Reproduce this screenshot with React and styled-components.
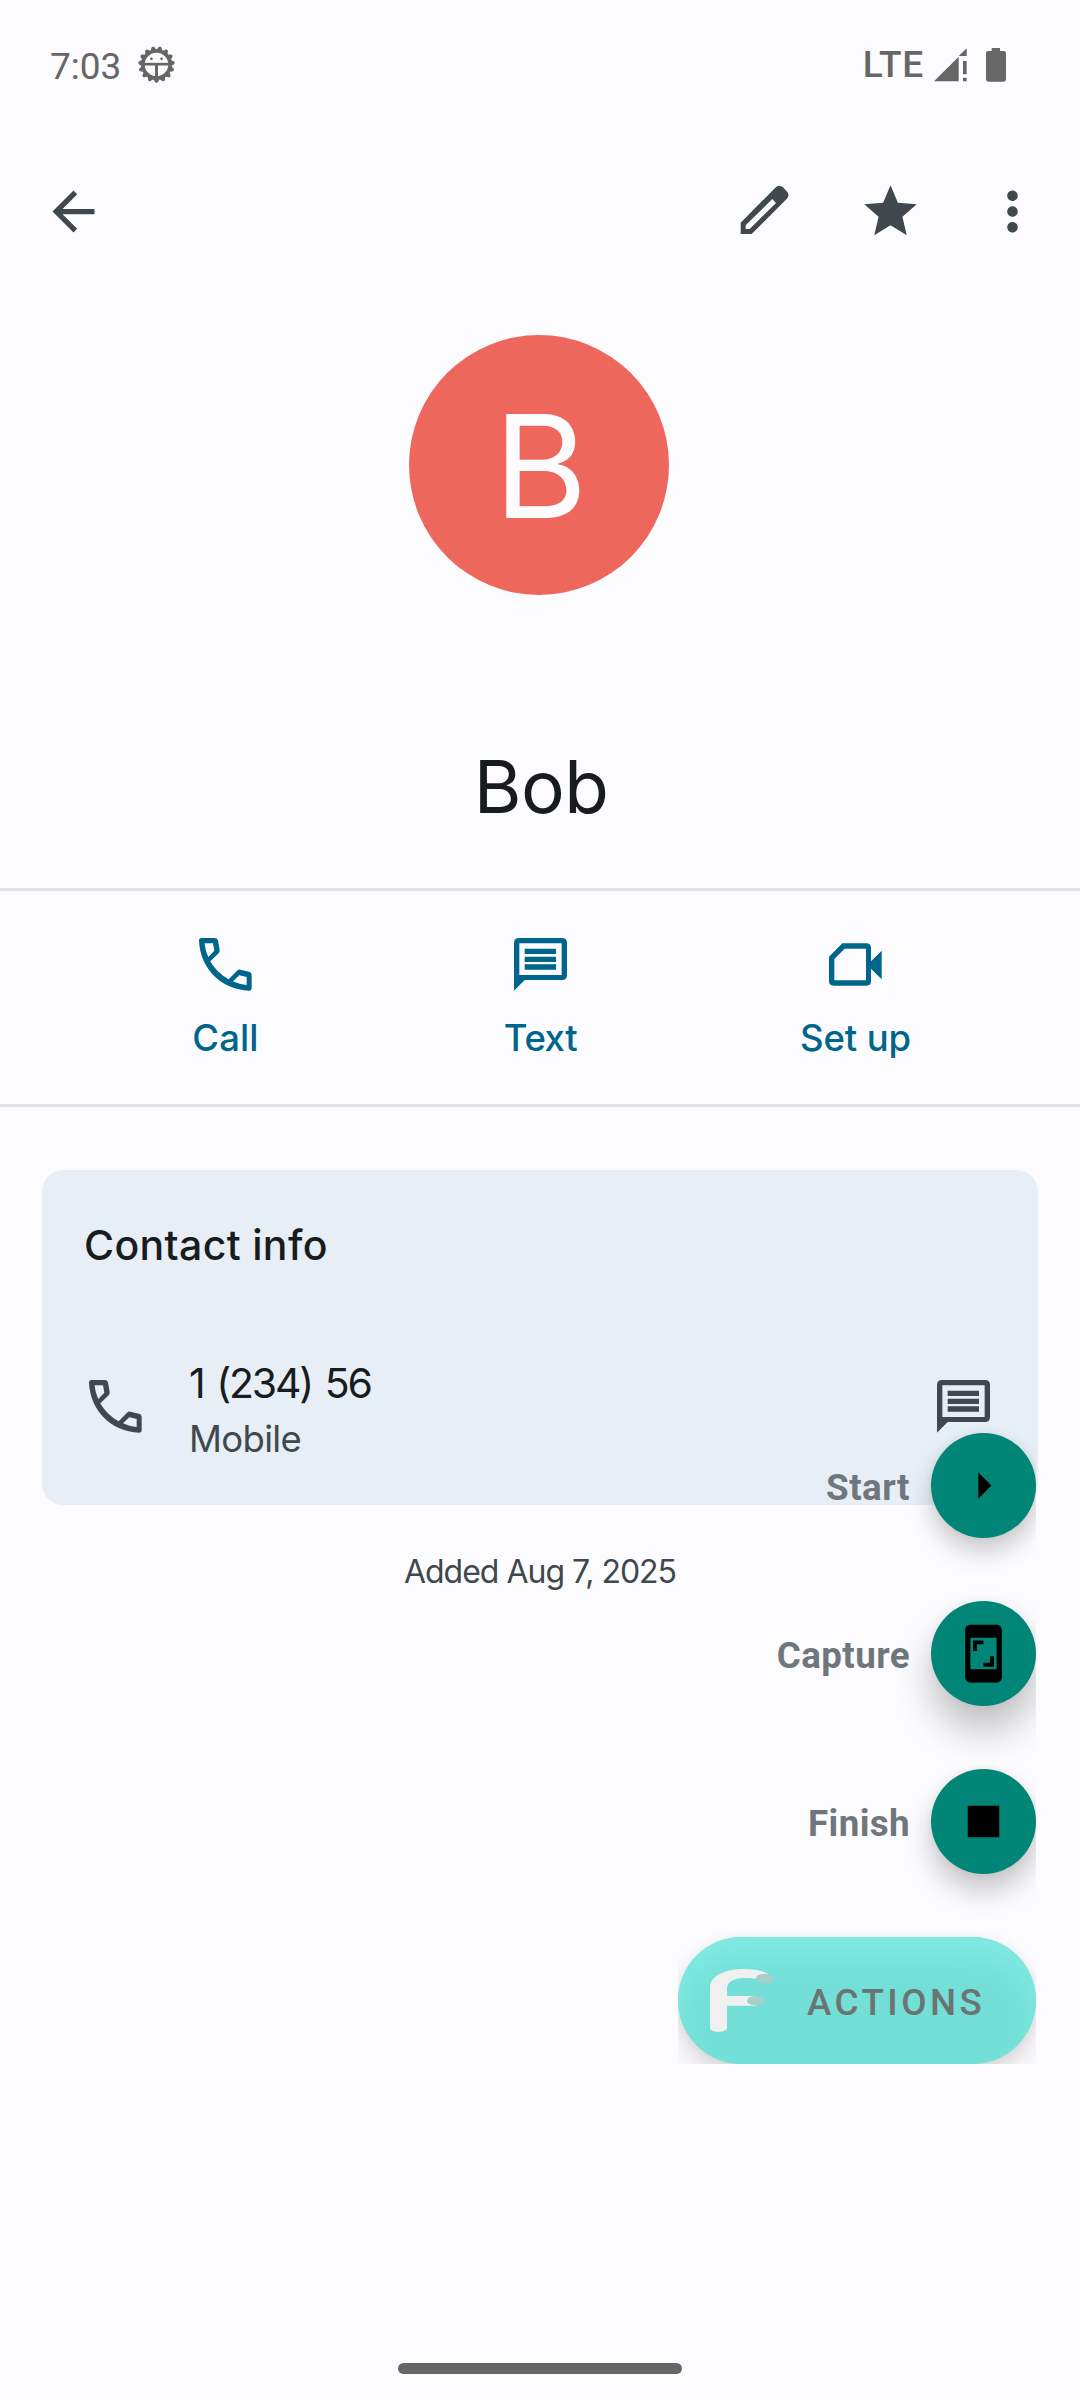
import React from "react";
import styled, { createGlobalStyle } from "styled-components";

const sans = `Inter, "Open Sans", sans-serif`;
const roboto = `Roboto, "Liberation Sans", sans-serif`;

const Global = createGlobalStyle`
  * { box-sizing: border-box; }
  body { margin: 0; background: #fcfcff; }
  svg { display: block; flex: none; }
`;

const Screen = styled.div`
  position: relative;
  display: flex;
  flex-direction: column;
  width: 1080px;
  height: 2400px;
  background: #fcfcff;
  color: #191c1e;
  font-family: ${sans};
  overflow: hidden;
`;

const Text = styled.span`
  display: block;
  white-space: pre;
  font-family: ${(p) => p.$family || sans};
  font-size: ${(p) => p.$size}px;
  font-weight: ${(p) => p.$weight || 400};
  line-height: ${(p) => p.$line}px;
  letter-spacing: ${(p) => p.$track || 0}px;
  word-spacing: ${(p) => p.$word || 0}px;
  color: ${(p) => p.$color || "inherit"};
`;

/* Status bar */
const StatusBar = styled.div`
  display: flex;
  align-items: center;
  justify-content: space-between;
  height: 132px;
  padding: 0 74px 0 50px;
  color: #666;
`;
const StatusLeft = styled.div`
  display: flex;
  align-items: center;
`;
const Clock = styled(Text)`
  width: 88px;
  padding-top: 1px;
`;
const GearSlot = styled.div`
  padding-bottom: 3px;
`;
const StatusRight = styled.div`
  display: flex;
  align-items: center;
  padding-bottom: 3px;
`;
const Signal = styled.svg`
  margin: 0 19px 0 10px;
`;

/* Toolbar */
const Toolbar = styled.div`
  display: flex;
  align-items: center;
  justify-content: space-between;
  height: 159px;
  padding: 0 36px 0 42px;
  color: #41484d;
`;
const ToolbarActions = styled.div`
  display: grid;
  grid-template-columns: 63px 63px 63px;
  column-gap: 63px;
`;
const ToolbarSlot = styled.div`
  padding-left: ${(p) => p.$shift || 0}px;
`;

/* Profile */
const Profile = styled.div`
  display: flex;
  flex-direction: column;
  align-items: center;
  height: 597px;
  padding-top: 44px;
`;
const Avatar = styled.div`
  display: flex;
  align-items: center;
  justify-content: center;
  width: 260px;
  height: 260px;
  margin-right: 2px;
  padding: 2px 0 0 3px;
  border-radius: 50%;
  background: #ee675c;
  color: #fcfcff;
`;
const Name = styled(Text)`
  margin: 142px 0 0 2px;
`;

/* Quick actions */
const QuickActions = styled.div`
  display: grid;
  grid-template-columns: repeat(3, 315px);
  justify-content: center;
  height: 219px;
  padding-top: 47px;
  border: solid #dde3e9;
  border-width: 3px 0;
  color: #00658a;
`;
const QuickAction = styled.div`
  display: flex;
  flex-direction: column;
  align-items: center;
  gap: 25px;
`;
const QuickLabel = styled(Text)`
  padding-left: 1px;
`;

/* Contact card */
const Card = styled.section`
  height: 335px;
  margin: 63px 42px 0;
  padding: 45px 48px 0 42px;
  border-radius: 21px;
  background: #e7eef5;
`;
const PhoneRow = styled.div`
  display: flex;
  align-items: flex-start;
  margin-top: 80px;
  color: #41484d;
`;
const RowIcon = styled.div`
  margin: ${(p) => p.$margin};
`;
const PhoneText = styled.div`
  flex: 1;
`;
const Added = styled(Text)`
  align-self: center;
  margin-top: 47px;
`;
const HomeBar = styled.div`
  align-self: center;
  width: 284px;
  height: 11px;
  margin: auto 0 26px;
  border-radius: 6px;
  background: #666;
`;

/* Floating action menu, layered over the page */
const FabMenu = styled.div`
  position: absolute;
  top: 1433px;
  right: 44px;
  display: flex;
  flex-direction: column;
  align-items: flex-end;
  gap: 63px;
  width: 358px;
  clip-path: inset(-40px 0 0 0);
`;
const FabRow = styled.div`
  display: flex;
  align-items: center;
  gap: 21px;
`;
const FabLabel = styled(Text)`
  padding-top: 4px;
`;
const Fab = styled.div`
  display: flex;
  align-items: center;
  justify-content: center;
  width: 105px;
  height: 105px;
  border-radius: 50%;
  background: #018577;
  color: #000;
  box-shadow: ${(p) => p.$shadow};
`;
const ActionsPill = styled.div`
  display: flex;
  align-items: center;
  width: 358px;
  height: 127px;
  padding-left: 32px;
  border-radius: 64px;
  background: #73dfd7;
  box-shadow: inset 0 22px 34px -4px #82ebe3, 0 14px 26px rgba(0, 0, 0, 0.14), 0 0 10px rgba(0, 0, 0, 0.05);
`;
const PillLabel = styled(Text)`
  margin-left: 34px;
  padding-top: 4px;
`;

const Icon = ({ d, size = 63, viewBox = "0 0 24 24" }) => (
  <svg width={size} height={size} viewBox={viewBox} fill="currentColor" fillRule="evenodd">
    <path d={d} />
  </svg>
);

const PhoneIcon = () => (
  <Icon
    size={53}
    viewBox="0 0 159 159"
    d="M7 0H47Q55 0 57 7L62 36Q63 41 59 46L34 70C46 92 66 111 89 124L114 98Q118 94 124 95L150 101Q158 103 158 110V150Q158 158 150 158C66 154 4 92 0 8Q0 0 7 0ZM17 16C18 30 22 44 28 57L46 38L42 16ZM102 130C115 136 129 140 143 141V117L121 112Z"
  />
);

const MessageIcon = () => (
  <Icon
    size={53}
    viewBox="0 0 159 159"
    d="M15 0H144Q159 0 159 15V111Q159 126 144 126H32L0 158V15Q0 0 15 0ZM16 16V111H143V16ZM32 32H126V48H32ZM32 56H126V72H32ZM32 79H126V95H32Z"
  />
);

const VideoIcon = () => (
  <Icon
    size={53}
    viewBox="0 -16 159 159"
    d="M40 0H112Q126 0 126 14V54L158 22V108L126 76V114Q126 127 112 127H14Q0 127 0 114V40ZM47 16L16 47V111H111V16Z"
  />
);

const PencilIcon = () => (
  <Icon
    viewBox="0 0 189 189"
    d="M23 162V128L127 23Q138 12 150 22L161 34Q172 45 161 57L56 162ZM38 147H50L129 69L118 57L38 136Z"
  />
);

const teeth = Array.from({ length: 15 }, (_, i) => i * 24);
const GearIcon = () => (
  <svg width="37" height="37" viewBox="-55 -55 110 110">
    <g fill="#666">
      {teeth.map((a) => (
        <path key={a} transform={`rotate(${a})`} d="M-10 40L-5 51Q0 58 5 51L10 40Z" />
      ))}
      <path fillRule="evenodd" d="M0-46A46 46 0 1 1 0 46A46 46 0 1 1 0-46ZM0-35A35 35 0 1 0 0 35A35 35 0 1 0 0-35Z" />
      <rect x="-38" y="-5" width="76" height="8" />
      <rect x="-4.5" y="0" width="9" height="38" />
      <circle cx="-15" cy="-17" r="4" />
      <circle cx="15" cy="-17" r="4" />
    </g>
  </svg>
);

const LogoIcon = () => (
  <svg width="63" height="63" viewBox="0 0 189 189">
    <path
      fill="#f0f0f0"
      d="M0 55C0 22 42 0 101 0C135 0 160 6 175 14L150 32C132 28 116 27 101 27C72 27 51 40 51 56V81H137V110H51V176C51 192 0 192 0 176Z"
    />
    <ellipse cx="164" cy="28" rx="26" ry="14" fill="#a7cec7" />
    <ellipse cx="137" cy="95" rx="26" ry="14" fill="#a7cec7" />
  </svg>
);

const quickActions = [
  { label: "Call", icon: <PhoneIcon />, track: 0.1 },
  { label: "Text", icon: <MessageIcon />, track: -0.44 },
  { label: "Set up", icon: <VideoIcon />, track: -0.13 },
];

const fabs = [
  {
    label: "Start",
    track: 0.48,
    d: "M10 17l5-5-5-5z",
    shadow: "0 14px 24px rgba(0,0,0,.2), 0 0 8px rgba(0,0,0,.06)",
  },
  {
    label: "Capture",
    track: 0.41,
    d: "M17 1.01L7 1c-1.1 0-2 .9-2 2v18c0 1.1.9 2 2 2h10c1.1 0 2-.9 2-2V3c0-1.1-.9-1.99-2-1.99zM17 18H7V6h10v12zM9.5 8.5H12V7H8v4h1.5V8.5zM12 17h4v-4h-1.5v2.5H12V17z",
    shadow: "0 25px 38px rgba(0,0,0,.24), 0 0 12px rgba(0,0,0,.05)",
  },
  {
    label: "Finish",
    track: 0.38,
    d: "M6 6h12v12H6z",
    shadow: "0 17px 28px rgba(0,0,0,.22), 0 0 9px rgba(0,0,0,.06)",
  },
];

export default function App() {
  return (
    <Screen>
      <Global />
      <StatusBar>
        <StatusLeft>
          <Clock $family={roboto} $size={37} $line={44}>7:03</Clock>
          <GearSlot>
            <GearIcon />
          </GearSlot>
        </StatusLeft>
        <StatusRight>
          <Text $family={roboto} $size={37} $weight={500} $line={44} $track={0.74}>LTE</Text>
          <Signal width="33" height="34" viewBox="0 0 99 102" fill="#666">
            <path d="M0 100L74 26V100ZM74 24L98 1V24ZM87 39H98V79H87ZM87 89H98V100H87Z" />
          </Signal>
          <svg width="20" height="34" viewBox="0 0 60 102" fill="#666">
            <path d="M17 0H42V9H53Q60 9 60 16V94Q60 101 53 101H7Q0 101 0 94V16Q0 9 7 9H17Z" />
          </svg>
        </StatusRight>
      </StatusBar>

      <Toolbar>
        <Icon d="M20 11H7.83l5.59-5.59L12 4l-8 8 8 8 1.41-1.41L7.83 13H20v-2z" />
        <ToolbarActions>
          <ToolbarSlot $shift={4}>
            <PencilIcon />
          </ToolbarSlot>
          <ToolbarSlot $shift={4}>
            <Icon d="M12 17.27L18.18 21l-1.64-7.03L22 9.24l-7.19-.61L12 2 9.19 8.63 2 9.24l5.46 4.73L5.82 21z" />
          </ToolbarSlot>
          <ToolbarSlot>
            <Icon d="M12 8c1.1 0 2-.9 2-2s-.9-2-2-2-2 .9-2 2 .9 2 2 2zm0 2c-1.1 0-2 .9-2 2s.9 2 2 2 2-.9 2-2-.9-2-2-2zm0 6c-1.1 0-2 .9-2 2s.9 2 2 2 2-.9 2-2-.9-2-2-2z" />
          </ToolbarSlot>
        </ToolbarActions>
      </Toolbar>

      <Profile>
        <Avatar>
          <Text $size={143} $line={258}>B</Text>
        </Avatar>
        <Name $size={73} $line={100} $track={-0.52}>Bob</Name>
      </Profile>

      <QuickActions>
        {quickActions.map((a) => (
          <QuickAction key={a.label}>
            {a.icon}
            <QuickLabel $size={36.5} $weight={500} $line={44} $track={a.track}>{a.label}</QuickLabel>
          </QuickAction>
        ))}
      </QuickActions>

      <Card>
        <Text $size={41} $weight={500} $line={60} $track={0.34}>Contact info</Text>
        <PhoneRow>
          <RowIcon $margin="25px 47px 0 5px">
            <PhoneIcon />
          </RowIcon>
          <PhoneText>
            <Text $size={41} $line={56} $track={-2.2} $word={3.5} $color="#191c1e">1 (234) 56</Text>
            <Text $size={36.5} $line={56} $track={-0.68}>Mobile</Text>
          </PhoneText>
          <RowIcon $margin="25px 0 0">
            <MessageIcon />
          </RowIcon>
        </PhoneRow>
      </Card>

      <Added $size={32} $line={40} $track={-1} $color="#41484d">Added Aug 7, 2025</Added>
      <HomeBar />

      <FabMenu>
        {fabs.map((f) => (
          <FabRow key={f.label}>
            <FabLabel $family={roboto} $size={36.75} $weight={700} $line={44} $track={f.track} $color="#70777c">
              {f.label}
            </FabLabel>
            <Fab $shadow={f.shadow}>
              <Icon d={f.d} />
            </Fab>
          </FabRow>
        ))}
        <ActionsPill>
          <LogoIcon />
          <PillLabel $family={roboto} $size={36.75} $weight={500} $line={44} $track={3.45} $color="#6b7472">
            ACTIONS
          </PillLabel>
        </ActionsPill>
      </FabMenu>
    </Screen>
  );
}
